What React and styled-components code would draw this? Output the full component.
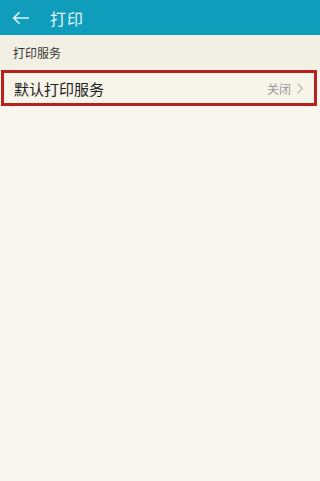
import React from 'react';
import styled, {createGlobalStyle} from 'styled-components';

const Global = createGlobalStyle`
    html, body {
        margin: 0;
        padding: 0;
        background: #f8f6ee;
    }
    body {
        font-family: "Noto Sans CJK SC", "Noto Sans", sans-serif;
    }
`;

const Page = styled.div`
    width: 320px;
    height: 481px;
    background: #f8f6ee;
    display: flex;
    flex-direction: column;
`;
const Header = styled.header`
    height: 35px;
    background: #0f9dbb;
    display: flex;
    align-items: center;
    padding-left: 12px;
    gap: 20px;
    color: #e4f3f7;
`;
const Title = styled.h1`
    margin: 0;
    font-size: 16px;
    font-weight: 400;
    letter-spacing: 1px;
`;
const SectionHead = styled.div`
    height: 35px;
    background: #f2efe4;
    display: flex;
    align-items: center;
    padding-left: 13px;
    padding-bottom: 1px;
    box-sizing: border-box;
    font-size: 12px;
    color: #3a3835;
`;
const Item = styled.div`
    margin: 0 3px 0 1px;
    height: 30px;
    border: 3px solid #b7221e;
    display: flex;
    align-items: center;
    justify-content: space-between;
    padding: 0 11px 0 10px;
    background: #f7f4ea;
`;
const ItemLabel = styled.span`
    font-size: 15px;
    color: #222;
`;
const ItemValue = styled.span`
    display: flex;
    align-items: center;
    gap: 6px;
    font-size: 12px;
    color: #9a9894;
`;

export default function App() {
    return (
        <Page>
            <Global />
            <Header>
                <svg width="18" height="14" viewBox="0 0 18 14" fill="none" stroke="#e4f3f7" strokeWidth="1.6">
                    <path d="M17 7H2M7.5 1.2L1.7 7l5.8 5.8" />
                </svg>
                <Title>打印</Title>
            </Header>
            <SectionHead>打印服务</SectionHead>
            <Item>
                <ItemLabel>默认打印服务</ItemLabel>
                <ItemValue>
                    关闭
                    <svg width="6" height="11" viewBox="0 0 6 11" fill="none" stroke="#b5b3ae" strokeWidth="1.1">
                        <path d="M0.6 0.6L5.3 5.5L0.6 10.4" />
                    </svg>
                </ItemValue>
            </Item>
        </Page>
    );
}
